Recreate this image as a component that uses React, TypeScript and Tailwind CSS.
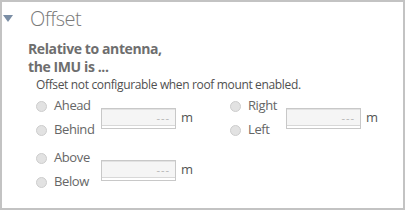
import React from "react";

function Radio({ label }: { label: string }) {
  return (
    <label className="flex items-center h-[24px] gap-[7px] cursor-pointer">
      <span className="w-[11px] h-[11px] shrink-0 rounded-full bg-[#e2e2e2] border border-[#cdcdcd]" />
      <span className="text-[13px] text-[#666666] tracking-[-0.4px] whitespace-nowrap">{label}</span>
    </label>
  );
}

function MeterInput() {
  return (
    <div className="flex items-center gap-[5px] ml-[10px]">
      <div className="w-[75px] h-[21px] border border-[#c8c8c8] bg-[#f5f5f5] shadow-[inset_0_1px_0_#e2e2e2,inset_0_-2px_0_#ffffff,inset_0_-3px_0_#d8d8d8] flex items-center justify-end pr-[5px]">
        <span className="text-[11px] text-[#b4b4b4] tracking-[1px]">---</span>
      </div>
      <span className="text-[13px] text-[#555555]">m</span>
    </div>
  );
}

function AxisGroup({ a, b, wide }: { a: string; b: string; wide?: boolean }) {
  return (
    <div className="flex items-center">
      <div className={`flex flex-col ${wide ? "w-[55px]" : "w-[46px]"}`}>
        <Radio label={a} />
        <Radio label={b} />
      </div>
      <MeterInput />
    </div>
  );
}

export default function App() {
  return (
    <div
      className="w-[405px] h-[210px] border-2 border-[#c3c3c3] bg-white overflow-hidden"
      style={{ fontFamily: '"Open Sans", "Noto Sans", sans-serif' }}
    >
      {/* Header */}
      <div className="flex items-center h-[30px] pt-[3px]">
        <svg className="ml-[1px] w-[10px] h-[8px]" viewBox="0 0 10 8">
          <path d="M0 0h10L5 7z" fill="#7b8ea5" />
        </svg>
        <span className="ml-[17px] text-[20px] font-light text-[#7a7a7a] leading-none tracking-[-0.5px]">
          Offset
        </span>
      </div>

      <div className="pl-[26px] pt-[8px]">
        <div className="text-[14px] font-bold text-[#6e6e6e] leading-[18px] tracking-[-0.4px]">
          Relative to antenna,
          <br />
          the IMU is ...
        </div>
        <div className="pl-[8px] text-[12px] text-[#505050] leading-[17px] tracking-[-0.35px]">
          Offset not configurable when roof mount enabled.
        </div>

        <div className="pl-[8px] pt-[1px] flex flex-col gap-[4px]">
          <div className="flex">
            <div className="w-[194px]">
              <AxisGroup a="Ahead" b="Behind" wide />
            </div>
            <AxisGroup a="Right" b="Left" />
          </div>
          <AxisGroup a="Above" b="Below" wide />
        </div>
      </div>
    </div>
  );
}
